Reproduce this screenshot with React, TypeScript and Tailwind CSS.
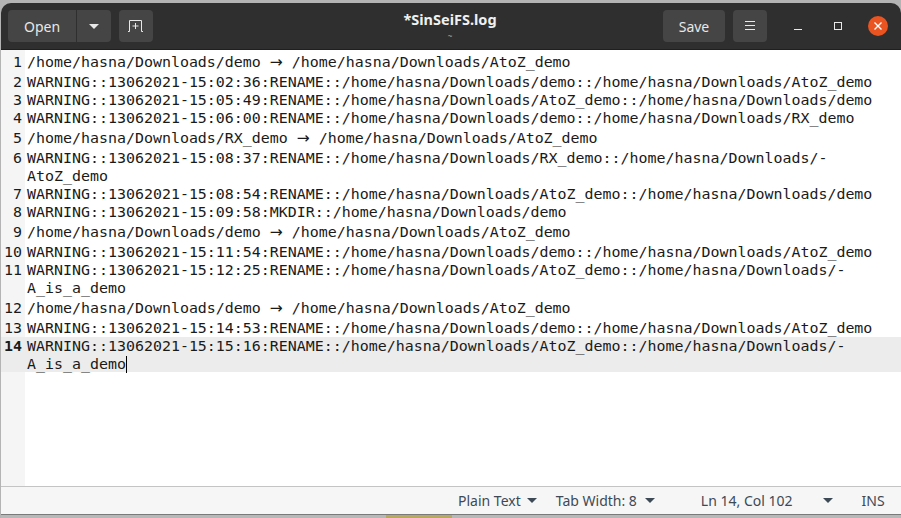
const lines: { n: number; text: string[]; arrow?: boolean; active?: boolean }[] = [
  { n: 1, text: ['/home/hasna/Downloads/demo → /home/hasna/Downloads/AtoZ_demo'], arrow: true },
  { n: 2, text: ['WARNING::13062021-15:02:36:RENAME::/home/hasna/Downloads/demo::/home/hasna/Downloads/AtoZ_demo'] },
  { n: 3, text: ['WARNING::13062021-15:05:49:RENAME::/home/hasna/Downloads/AtoZ_demo::/home/hasna/Downloads/demo'] },
  { n: 4, text: ['WARNING::13062021-15:06:00:RENAME::/home/hasna/Downloads/demo::/home/hasna/Downloads/RX_demo'] },
  { n: 5, text: ['/home/hasna/Downloads/RX_demo → /home/hasna/Downloads/AtoZ_demo'], arrow: true },
  { n: 6, text: ['WARNING::13062021-15:08:37:RENAME::/home/hasna/Downloads/RX_demo::/home/hasna/Downloads/-', 'AtoZ_demo'] },
  { n: 7, text: ['WARNING::13062021-15:08:54:RENAME::/home/hasna/Downloads/AtoZ_demo::/home/hasna/Downloads/demo'] },
  { n: 8, text: ['WARNING::13062021-15:09:58:MKDIR::/home/hasna/Downloads/demo'] },
  { n: 9, text: ['/home/hasna/Downloads/demo → /home/hasna/Downloads/AtoZ_demo'], arrow: true },
  { n: 10, text: ['WARNING::13062021-15:11:54:RENAME::/home/hasna/Downloads/demo::/home/hasna/Downloads/AtoZ_demo'] },
  { n: 11, text: ['WARNING::13062021-15:12:25:RENAME::/home/hasna/Downloads/AtoZ_demo::/home/hasna/Downloads/-', 'A_is_a_demo'] },
  { n: 12, text: ['/home/hasna/Downloads/demo → /home/hasna/Downloads/AtoZ_demo'], arrow: true },
  { n: 13, text: ['WARNING::13062021-15:14:53:RENAME::/home/hasna/Downloads/demo::/home/hasna/Downloads/AtoZ_demo'] },
  { n: 14, text: ['WARNING::13062021-15:15:16:RENAME::/home/hasna/Downloads/AtoZ_demo::/home/hasna/Downloads/-', 'A_is_a_demo'], active: true },
]

function Caret({ className = '' }: { className?: string }) {
  return (
    <svg width="10" height="5" viewBox="0 0 10 5" className={className}>
      <path d="M0 0h10L5 5z" fill="currentColor" />
    </svg>
  )
}

// the arrow comes from a fallback font in the original, so it is wider than one cell
function LineText({ value }: { value: string }) {
  const parts = value.split('→')
  if (parts.length === 1) return <>{value}</>
  return (
    <>
      {parts[0]}
      <span className="font-['DejaVu_Sans',sans-serif] text-[15.5px] leading-[0]">→</span>
      {parts[1]}
    </>
  )
}

function Row({ n, text, arrow, active }: (typeof lines)[number]) {
  return (
    <div className={`flex ${active ? 'h-[35px] bg-[#ececec]' : ''}`}>
      <div className={`w-[24px] shrink-0 pr-[3px] text-right ${active ? 'bg-[#ececec] font-bold' : 'bg-[#f5f5f5]'} ${arrow ? 'leading-[22px]' : 'leading-[18px]'}`}>
        {n}
      </div>
      <div className="pl-[2px]">
        {text.map((t, i) => (
          <div key={i} className={`relative h-auto whitespace-pre ${arrow ? 'leading-[22px]' : 'leading-[18px]'}`}>
            <LineText value={t} />
            {active && i === 1 && <span className="absolute top-[1px] h-[17px] w-px bg-black" />}
          </div>
        ))}
      </div>
    </div>
  )
}

export default function App() {
  return (
    <div className="flex h-[518px] w-[901px] flex-col overflow-hidden bg-[#b4b4b4] pt-[3px] pl-px font-['Noto_Sans',sans-serif]">
      <header className="flex h-[47px] shrink-0 items-center rounded-t-[10px] border-b border-[#1f1f1f] bg-[#2f2f2f] pl-[7px] text-[14px] text-[#e8e8e8]">
        <div className="flex h-[32px] w-[103px] rounded-[4px] bg-[#454545]">
          <div className="flex w-[69px] items-center justify-center border-r border-[#2f2f2f]">Open</div>
          <div className="flex flex-1 items-center justify-center">
            <Caret className="text-[#e8e8e8]" />
          </div>
        </div>
        <div className="ml-[8px] flex h-[32px] w-[34px] items-center justify-center rounded-[4px] bg-[#454545]">
          <svg width="16" height="12" viewBox="0 0 16 12" fill="none" stroke="#e8e8e8" strokeWidth="1">
            <path d="M0 11.5h1.5V.5h12V11.5H15M7.5 3v6M4.5 6h6" />
          </svg>
        </div>
        <div className="flex flex-1 flex-col items-center pb-[2px] pl-[84px]">
          <div className="text-[14.5px] leading-[18px] font-bold text-[#f0f0f0]">*SinSeiFS.log</div>
          <div className="mt-[3px] text-[8px] leading-[10px] text-[#a8a8a8]">~</div>
        </div>
        <div className="flex h-[32px] w-[62px] items-center justify-center rounded-[4px] bg-[#454545]">Save</div>
        <div className="ml-[8px] flex h-[32px] w-[34px] items-center justify-center rounded-[4px] bg-[#454545]">
          <svg width="12" height="10" viewBox="0 0 12 10" fill="none" stroke="#e8e8e8" strokeWidth="1">
            <path d="M1 .5h10M1 4.5h10M1 8.5h10" />
          </svg>
        </div>
        <div className="ml-[27px] flex w-[8px] items-end">
          <div className="mt-[7px] h-px w-[8px] bg-[#e8e8e8]" />
        </div>
        <div className="ml-[32px] h-[8px] w-[8px] border border-[#e8e8e8]" />
        <div className="mr-[13px] ml-[26px] flex h-[20px] w-[20px] items-center justify-center rounded-full bg-[#e95420]">
          <svg width="8" height="8" viewBox="0 0 8 8" stroke="#ffffff" strokeWidth="1.4">
            <path d="M.5.5l7 7M7.5.5l-7 7" />
          </svg>
        </div>
      </header>
      <main className="flex flex-1 flex-col overflow-hidden bg-white font-['DejaVu_Sans_Mono',monospace] text-[14.95px] text-[#1a1a1a]">
        <div className="h-px w-[24px] shrink-0 bg-[#f5f5f5]" />
        <div>
          {lines.map((l) => (
            <Row key={l.n} {...l} />
          ))}
        </div>
        <div className="w-[24px] flex-1 bg-[#f5f5f5]" />
      </main>
      <footer className="flex h-[28px] shrink-0 items-center border-t border-[#c4c4c4] bg-[#f6f6f6] pb-[1px] text-[14px] text-[#3d4a55]">
        <div className="ml-[457px] flex items-center gap-[6px]">
          Plain Text
          <Caret className="text-[#3d4a55]" />
        </div>
        <div className="ml-[19px] flex items-center gap-[8px]">
          Tab Width: 8
          <Caret className="text-[#3d4a55]" />
        </div>
        <div className="ml-[46px]">Ln 14, Col 102</div>
        <Caret className="ml-[30px] text-[#3d4a55]" />
        <div className="ml-[29px] pt-[1px]">INS</div>
      </footer>
      <div className="flex h-[4px] shrink-0 border-t border-[#7a7a7a] bg-[#b8b8b8]">
        <div className="ml-[385px] w-[66px] bg-[#b9a860]" />
      </div>
    </div>
  )
}
